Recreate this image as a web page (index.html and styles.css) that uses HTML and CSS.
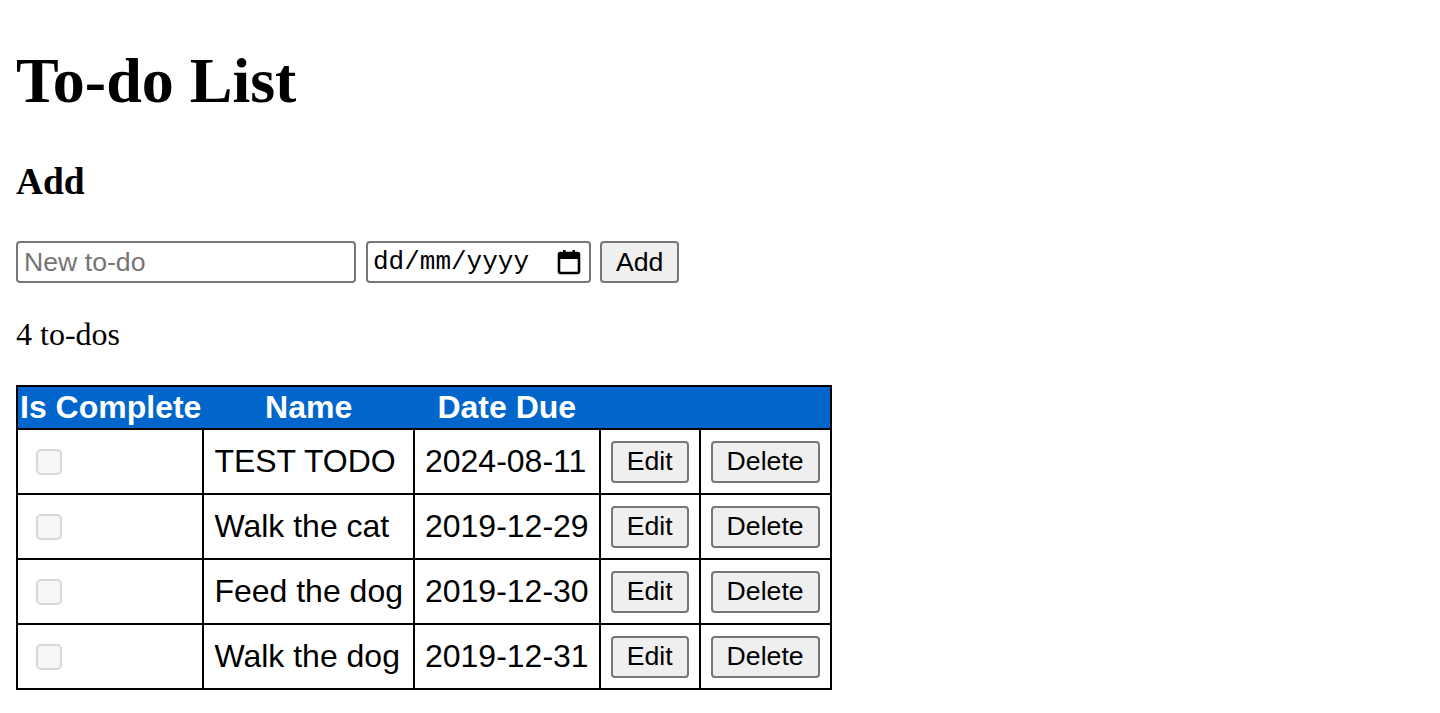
FILE: index.html
```html
<!DOCTYPE html>
<html lang="en">
<head>
<meta charset="utf-8">
<title>To-do List</title>
<link rel="stylesheet" href="styles.css">
</head>
<body>
<h1 class="title">To-do List</h1>
<h3 class="subtitle">Add</h3>
<form class="add-form">
  <input class="text-input" type="text" placeholder="New to-do">
  <div class="date-input">
    <span class="date-text">dd/mm/yyyy</span>
    <svg class="cal-icon" width="24" height="26" viewBox="0 0 24 26" aria-hidden="true">
      <rect x="2" y="4" width="20" height="20" rx="1.5" fill="none" stroke="#000" stroke-width="2.6"/>
      <rect x="2" y="4" width="20" height="6" fill="#000"/>
      <rect x="6" y="1" width="2.6" height="5" fill="#000"/>
      <rect x="15.4" y="1" width="2.6" height="5" fill="#000"/>
    </svg>
  </div>
  <button class="btn" type="button">Add</button>
</form>
<p class="count">4 to-dos</p>
<table class="todo-table">
  <thead>
    <tr>
      <th>Is Complete</th>
      <th>Name</th>
      <th>Date Due</th>
      <th></th>
      <th></th>
    </tr>
  </thead>
  <tbody>
    <tr>
      <td><span class="check"></span></td>
      <td>TEST TODO</td>
      <td>2024-08-11</td>
      <td><button class="btn" type="button">Edit</button></td>
      <td><button class="btn" type="button">Delete</button></td>
    </tr>
    <tr>
      <td><span class="check"></span></td>
      <td>Walk the cat</td>
      <td>2019-12-29</td>
      <td><button class="btn" type="button">Edit</button></td>
      <td><button class="btn" type="button">Delete</button></td>
    </tr>
    <tr>
      <td><span class="check"></span></td>
      <td>Feed the dog</td>
      <td>2019-12-30</td>
      <td><button class="btn" type="button">Edit</button></td>
      <td><button class="btn" type="button">Delete</button></td>
    </tr>
    <tr>
      <td><span class="check"></span></td>
      <td>Walk the dog</td>
      <td>2019-12-31</td>
      <td><button class="btn" type="button">Edit</button></td>
      <td><button class="btn" type="button">Delete</button></td>
    </tr>
  </tbody>
</table>
</body>
</html>
```

FILE: styles.css
```css
html, body {
  background: #fff;
}
body {
  margin: 0;
  padding: 0 16px;
  font-family: "Liberation Serif", "Times New Roman", serif;
  font-size: 32px;
  color: #000;
}
.title {
  margin: 45px 0 0;
  font-size: 64px;
  line-height: 71px;
  font-weight: bold;
}
.subtitle {
  margin: 45px 0 0;
  font-size: 37.44px;
  line-height: 41px;
  font-weight: bold;
}
.add-form {
  display: flex;
  align-items: center;
  margin: 39px 0 0;
  height: 42px;
}
.text-input {
  box-sizing: border-box;
  width: 340px;
  height: 42px;
  margin: 0 10px 0 0;
  padding: 2px 6px;
  border: 2px solid #767676;
  border-radius: 4px;
  font-family: "Liberation Sans", Arial, sans-serif;
  font-size: 26.67px;
  color: #000;
  background: #fff;
  outline: none;
}
.text-input::placeholder {
  color: #757575;
}
.date-input {
  box-sizing: border-box;
  width: 225px;
  height: 42px;
  margin: 0 9px 0 0;
  padding: 0 8px 0 5px;
  border: 2px solid #767676;
  border-radius: 4px;
  display: flex;
  align-items: center;
  justify-content: space-between;
}
.date-text {
  font-family: "Liberation Mono", "Courier New", monospace;
  font-size: 26px;
  line-height: 30px;
  color: #000;
}
.cal-icon {
  display: block;
}
.btn {
  box-sizing: border-box;
  height: 42px;
  padding: 2px 14px;
  border: 2px solid #767676;
  border-radius: 4px;
  background: #efefef;
  font-family: "Liberation Sans", Arial, sans-serif;
  font-size: 26.67px;
  line-height: 31px;
  color: #000;
}
.count {
  margin: 33px 0 0;
  line-height: 36px;
}
.todo-table {
  margin: 33px 0 0;
  border-collapse: collapse;
  border: 2px solid #000;
  font-family: "Liberation Sans", Arial, sans-serif;
  font-size: 32px;
}
.todo-table th {
  background: #0066cc;
  color: #fff;
  font-weight: bold;
  padding: 2px;
  line-height: 37px;
  border: none;
}
.todo-table td {
  border: 2px solid #000;
  padding: 10px;
  line-height: 37px;
  height: 43px;
  white-space: nowrap;
}
.check {
  display: inline-block;
  box-sizing: border-box;
  width: 26px;
  height: 26px;
  margin: 0 6px 4px 8px;
  border: 2px solid #d8d8d8;
  border-radius: 5px;
  background: #f6f6f6;
  vertical-align: middle;
}
```
